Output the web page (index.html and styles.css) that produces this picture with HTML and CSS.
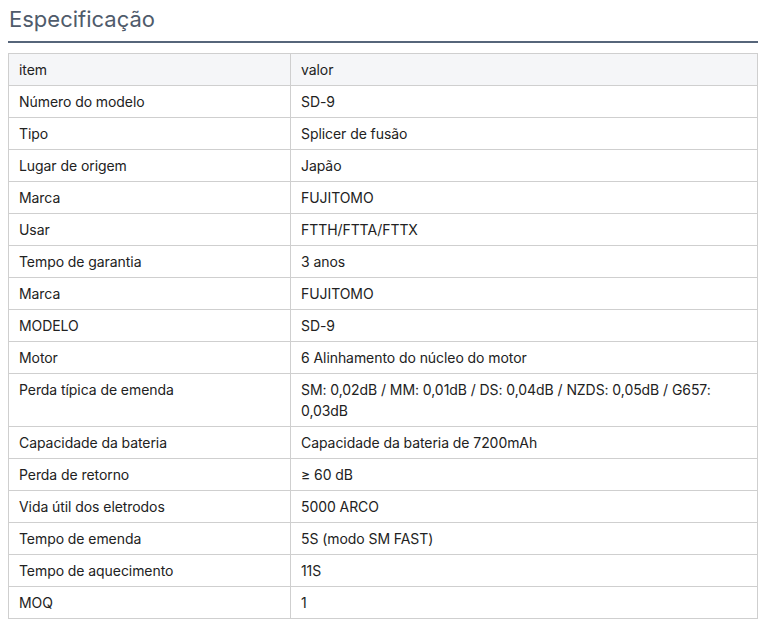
FILE: index.html
```html
<!DOCTYPE html>
<html lang="pt">
<head>
    <meta charset="UTF-8">
    <meta name="viewport" content="width=device-width, initial-scale=1.0">
    <title>Especificação</title>
    <link rel="stylesheet" href="styles.css">
</head>
<body>
    <div class="spec">
        <h2 class="spec-title">Especificação</h2>

        <table class="spec-table">
            <tr class="head">
                <td>item</td>
                <td>valor</td>
            </tr>
            <tr><td>Número do modelo</td><td>SD-9</td></tr>
            <tr><td>Tipo</td><td>Splicer de fusão</td></tr>
            <tr><td>Lugar de origem</td><td>Japão</td></tr>
            <tr><td>Marca</td><td>FUJITOMO</td></tr>
            <tr><td>Usar</td><td>FTTH/FTTA/FTTX</td></tr>
            <tr><td>Tempo de garantia</td><td>3 anos</td></tr>
            <tr><td>Marca</td><td>FUJITOMO</td></tr>
            <tr><td>MODELO</td><td>SD-9</td></tr>
            <tr><td>Motor</td><td>6 Alinhamento do núcleo do motor</td></tr>
            <tr><td>Perda típica de emenda</td><td>SM: 0,02dB / MM: 0,01dB / DS: 0,04dB / NZDS: 0,05dB / G657: 0,03dB</td></tr>
            <tr><td>Capacidade da bateria</td><td>Capacidade da bateria de 7200mAh</td></tr>
            <tr><td>Perda de retorno</td><td>≥ 60 dB</td></tr>
            <tr><td>Vida útil dos eletrodos</td><td>5000 ARCO</td></tr>
            <tr><td>Tempo de emenda</td><td>5S (modo SM FAST)</td></tr>
            <tr><td>Tempo de aquecimento</td><td>11S</td></tr>
            <tr><td>MOQ</td><td>1</td></tr>
        </table>
    </div>
</body>
</html>
```
FILE: styles.css
```css
/* General Styles */
body {
    font-family: 'Inter', 'Noto Sans', sans-serif;
    background-color: #fff;
    color: #222;
    margin: 0;
    padding: 0 6px 0 8px;
}

.spec {
    width: 750px;
}

.spec-title {
    font-size: 22px;
    font-weight: 400;
    color: #4f5b6b;
    margin: 0;
    padding: 3px 0 0 1px;
    line-height: 32px;
    height: 38px;
    border-bottom: 2px solid #56657a;
}

/* Table */
.spec-table {
    width: 100%;
    margin-top: 10px;
    border-collapse: collapse;
    font-size: 14px;
    line-height: 21px;
    letter-spacing: -0.07px;
}

.spec-table td {
    border: 1px solid #cfcfcf;
    padding: 5px 10px;
    vertical-align: top;
    text-align: left;
}

.spec-table td:first-child {
    width: 261px;
}

.spec-table .head td {
    background-color: #f5f6f8;
}
```
